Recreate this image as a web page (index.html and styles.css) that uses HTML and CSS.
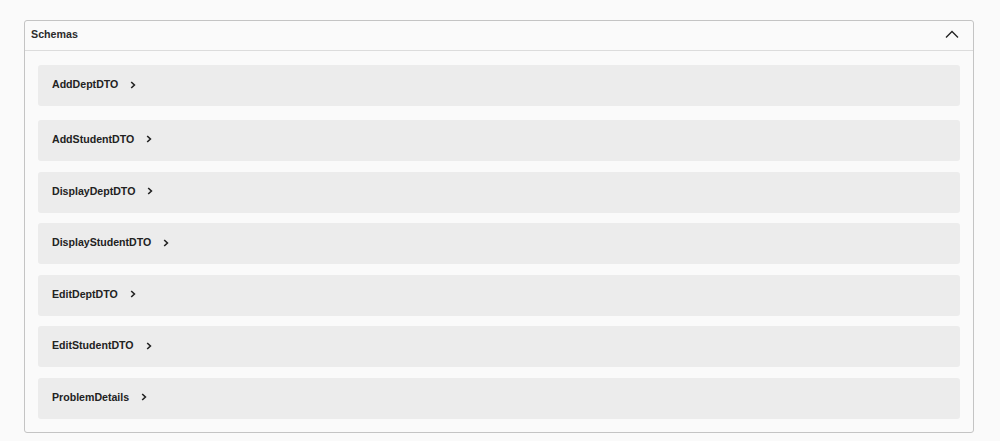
FILE: index.html
```html
<!DOCTYPE html>
<html>
<head>
<meta charset="utf-8">
<link rel="stylesheet" href="styles.css">
</head>
<body>
<section class="models">
  <div class="models-header">
    <span class="models-title">Schemas</span>
    <svg class="arrow-up" width="14" height="8" viewBox="0 0 14 8"><path d="M1 7.5 L7 1.5 L13 7.5" fill="none" stroke="#222" stroke-width="1.3"/></svg>
  </div>
  <div class="models-body">
    <div class="model"><span class="model-name">AddDeptDTO</span><svg class="chev" width="6" height="8" viewBox="0 0 6 8"><path d="M1.2 1 L4.4 4 L1.2 7" fill="none" stroke="#222" stroke-width="1.6"/></svg></div>
    <div class="model"><span class="model-name">AddStudentDTO</span><svg class="chev" width="6" height="8" viewBox="0 0 6 8"><path d="M1.2 1 L4.4 4 L1.2 7" fill="none" stroke="#222" stroke-width="1.6"/></svg></div>
    <div class="model"><span class="model-name">DisplayDeptDTO</span><svg class="chev" width="6" height="8" viewBox="0 0 6 8"><path d="M1.2 1 L4.4 4 L1.2 7" fill="none" stroke="#222" stroke-width="1.6"/></svg></div>
    <div class="model"><span class="model-name">DisplayStudentDTO</span><svg class="chev" width="6" height="8" viewBox="0 0 6 8"><path d="M1.2 1 L4.4 4 L1.2 7" fill="none" stroke="#222" stroke-width="1.6"/></svg></div>
    <div class="model"><span class="model-name">EditDeptDTO</span><svg class="chev" width="6" height="8" viewBox="0 0 6 8"><path d="M1.2 1 L4.4 4 L1.2 7" fill="none" stroke="#222" stroke-width="1.6"/></svg></div>
    <div class="model"><span class="model-name">EditStudentDTO</span><svg class="chev" width="6" height="8" viewBox="0 0 6 8"><path d="M1.2 1 L4.4 4 L1.2 7" fill="none" stroke="#222" stroke-width="1.6"/></svg></div>
    <div class="model"><span class="model-name">ProblemDetails</span><svg class="chev" width="6" height="8" viewBox="0 0 6 8"><path d="M1.2 1 L4.4 4 L1.2 7" fill="none" stroke="#222" stroke-width="1.6"/></svg></div>
  </div>
</section>
</body>
</html>
```
FILE: styles.css
```css
html, body {
  margin: 0;
  padding: 0;
  background: #fafafa;
  font-family: "Liberation Sans", Arial, sans-serif;
}
body {
  padding: 20px 26px 0 24px;
}
.models {
  border: 1px solid #c4c4c4;
  border-radius: 3px;
  background: #fafafa;
  width: 948px;
}
.models-header {
  height: 29px;
  display: flex;
  align-items: center;
  justify-content: space-between;
  padding: 0 14px 0 6px;
  border-bottom: 1px solid #dcdcdc;
}
.models-title {
  font-size: 10.7px;
  font-weight: bold;
  color: #2b2b2b;
  margin-top: -3px;
}
.arrow-up {
  display: block;
  margin-top: -4px;
}
.models-body {
  padding: 14px 13px 13px 13px;
  display: flex;
  flex-direction: column;
  gap: 10.6px;
}
.models-body .model:first-child {
  margin-bottom: 3.4px;
}
.model {
  height: 41px;
  background: #ececec;
  border-radius: 3px;
  display: flex;
  align-items: center;
  padding-left: 14px;
  gap: 12px;
}
.model-name {
  font-size: 10.6px;
  font-weight: bold;
  color: #222;
  margin-top: -3px;
}
.chev {
  display: block;
  margin-top: -2px;
}
```
